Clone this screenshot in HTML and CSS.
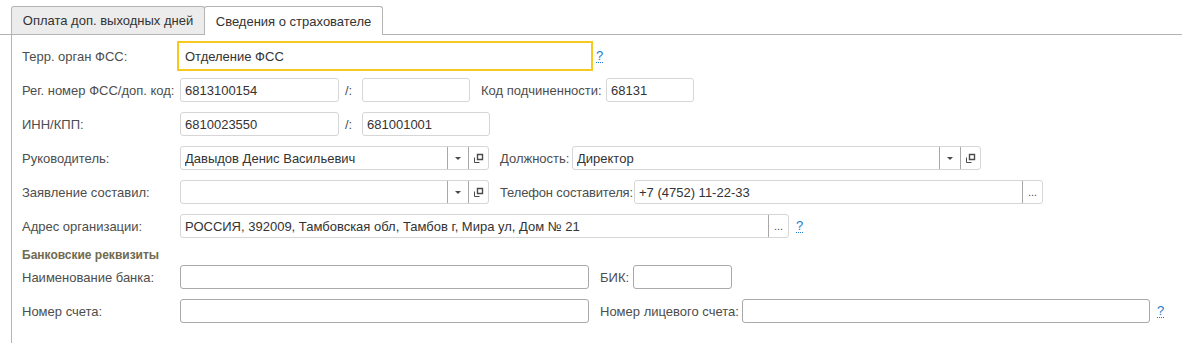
FILE: index.html
```html
<!DOCTYPE html>
<html>
<head>
   <meta charset="UTF-8">
   <title>Сведения о страхователе</title>
   <link rel="stylesheet" href="styles.css">
</head>
<body>
   <div class="tabs">
       <div class="tab tab-first">Оплата доп. выходных дней</div>
       <div class="tab tab-active">Сведения о страхователе</div>
   </div>

   <div class="panel">
       <div class="row">
           <span class="label">Терр. орган ФСС:</span>
           <div class="field w410 focus">Отделение ФСС</div>
           <a class="help">?</a>
       </div>

       <div class="row">
           <span class="label">Рег. номер ФСС/доп. код:</span>
           <div class="field w159">6813100154</div>
           <span class="label slash">/:</span>
           <div class="field w108"></div>
           <span class="label lbl-kod">Код подчиненности:</span>
           <div class="field w88">68131</div>
       </div>

       <div class="row">
           <span class="label">ИНН/КПП:</span>
           <div class="field w159">6810023550</div>
           <span class="label slash">/:</span>
           <div class="field w128">681001001</div>
       </div>

       <div class="row">
           <span class="label">Руководитель:</span>
           <div class="field w309">
               <span class="value">Давыдов Денис Васильевич</span>
               <span class="btn btn-drop"><i class="arrow"></i></span>
               <span class="btn btn-open">
                   <svg width="11" height="11" viewBox="0 0 11 11"><path d="M4.5 1.5h5v5h-5z" fill="none" stroke="#4a4a4a" stroke-width="1.4"/><path d="M1.5 4.5v5h5" fill="none" stroke="#4a4a4a" stroke-width="1"/></svg>
               </span>
           </div>
           <span class="label lbl-dolzh">Должность:</span>
           <div class="field w409">
               <span class="value">Директор</span>
               <span class="btn btn-drop"><i class="arrow"></i></span>
               <span class="btn btn-open">
                   <svg width="11" height="11" viewBox="0 0 11 11"><path d="M4.5 1.5h5v5h-5z" fill="none" stroke="#4a4a4a" stroke-width="1.4"/><path d="M1.5 4.5v5h5" fill="none" stroke="#4a4a4a" stroke-width="1"/></svg>
               </span>
           </div>
       </div>

       <div class="row">
           <span class="label">Заявление составил:</span>
           <div class="field w309">
               <span class="value"></span>
               <span class="btn btn-drop"><i class="arrow"></i></span>
               <span class="btn btn-open">
                   <svg width="11" height="11" viewBox="0 0 11 11"><path d="M4.5 1.5h5v5h-5z" fill="none" stroke="#4a4a4a" stroke-width="1.4"/><path d="M1.5 4.5v5h5" fill="none" stroke="#4a4a4a" stroke-width="1"/></svg>
               </span>
           </div>
           <span class="label lbl-tel">Телефон составителя:</span>
           <div class="field w409">
               <span class="value">+7 (4752) 11-22-33</span>
               <span class="btn btn-dots">...</span>
           </div>
       </div>

       <div class="row">
           <span class="label">Адрес организации:</span>
           <div class="field w609">
               <span class="value">РОССИЯ, 392009, Тамбовская обл, Тамбов г, Мира ул, Дом № 21</span>
               <span class="btn btn-dots">...</span>
           </div>
           <a class="help help-addr">?</a>
       </div>

       <div class="group-title">Банковские реквизиты</div>

       <div class="row">
           <span class="label">Наименование банка:</span>
           <div class="field dark w409"></div>
           <span class="label lbl-bik">БИК:</span>
           <div class="field dark w99"></div>
       </div>

       <div class="row">
           <span class="label">Номер счета:</span>
           <div class="field dark w409"></div>
           <span class="label lbl-lic">Номер лицевого счета:</span>
           <div class="field dark w408"></div>
           <a class="help help-lic">?</a>
       </div>
   </div>
</body>
</html>
```

FILE: styles.css
```css
* {
    margin: 0;
    padding: 0;
    box-sizing: border-box;
}

body {
    font-family: 'Liberation Sans', Arial, sans-serif;
    font-size: 13px;
    color: #333333;
    background-color: #FFFFFF;
    width: 1182px;
    height: 343px;
    overflow: hidden;
}

.tabs {
    display: flex;
    align-items: flex-end;
    padding: 6px 0 0 11px;
    height: 35px;
    border-bottom: 1px solid #B4B4B4;
}

.tab {
    height: 28px;
    display: flex;
    align-items: center;
    justify-content: center;
    border: 1px solid #B4B4B4;
    border-bottom: none;
    border-radius: 3px 3px 0 0;
    color: #333333;
}

.tab-first {
    width: 194px;
    background-color: #ECECEC;
}

.tab-active {
    width: 179px;
    height: 29px;
    margin-left: -1px;
    margin-bottom: -1px;
    background-color: #FFFFFF;
}

.panel {
    margin-left: 11px;
    border-left: 1px solid #B4B4B4;
    padding: 9px 0 0 10px;
    height: 308px;
    display: flex;
    flex-direction: column;
    gap: 10px;
}

.row {
    display: flex;
    align-items: center;
    height: 24px;
}

.label {
    width: 158px;
    flex-shrink: 0;
    color: #4D4D4D;
    white-space: nowrap;
}

.slash { width: 17px; margin-left: 6px; }
.lbl-kod { width: 125px; margin-left: 11px; }
.lbl-dolzh { width: 72px; margin-left: 11px; }
.lbl-tel { width: 134px; margin-left: 11px; letter-spacing: -0.15px; }
.lbl-bik { width: 33px; margin-left: 11px; }
.lbl-lic { width: 142px; margin-left: 11px; }

.field {
    height: 24px;
    flex-shrink: 0;
    display: flex;
    align-items: center;
    border: 1px solid #D6D6D6;
    border-radius: 3px;
    padding-left: 4px;
    color: #333333;
    white-space: nowrap;
    overflow: hidden;
}

.field.dark {
    border-color: #A9A9A9;
}

.field.focus {
    border-color: transparent;
    outline: 2px solid #F7C81E;
    outline-offset: 1px;
    border-radius: 0;
}

.w88 { width: 88px; }
.w99 { width: 99px; }
.w108 { width: 108px; }
.w128 { width: 128px; }
.w159 { width: 159px; }
.w309 { width: 309px; }
.w408 { width: 408px; }
.w409 { width: 409px; }
.w410 { width: 410px; }
.w609 { width: 609px; }

.value {
    flex: 1;
    overflow: hidden;
}

.btn {
    height: 22px;
    display: flex;
    align-items: center;
    justify-content: center;
    border-left: 1px solid #A8A8A8;
    color: #4A4A4A;
}

.btn-drop { width: 21px; }
.btn-open { width: 20px; }

.btn-dots {
    width: 20px;
    align-items: flex-end;
    padding-bottom: 5px;
    font-size: 11px;
    line-height: 11px;
}

.arrow {
    width: 0;
    height: 0;
    border-left: 3px solid transparent;
    border-right: 3px solid transparent;
    border-top: 3px solid #4A4A4A;
    margin-top: 1px;
}

.help {
    margin-left: 6px;
    color: #1C7BC8;
    text-decoration: none;
    border-bottom: 1px dotted #1C7BC8;
    line-height: 12px;
    font-size: 13px;
    cursor: pointer;
}

.help-addr { margin-left: 7px; }
.help-lic { margin-left: 7px; }

.group-title {
    height: 14px;
    line-height: 14px;
    margin-bottom: -7px;
    font-size: 12px;
    font-weight: bold;
    color: #6F6A50;
}
```
